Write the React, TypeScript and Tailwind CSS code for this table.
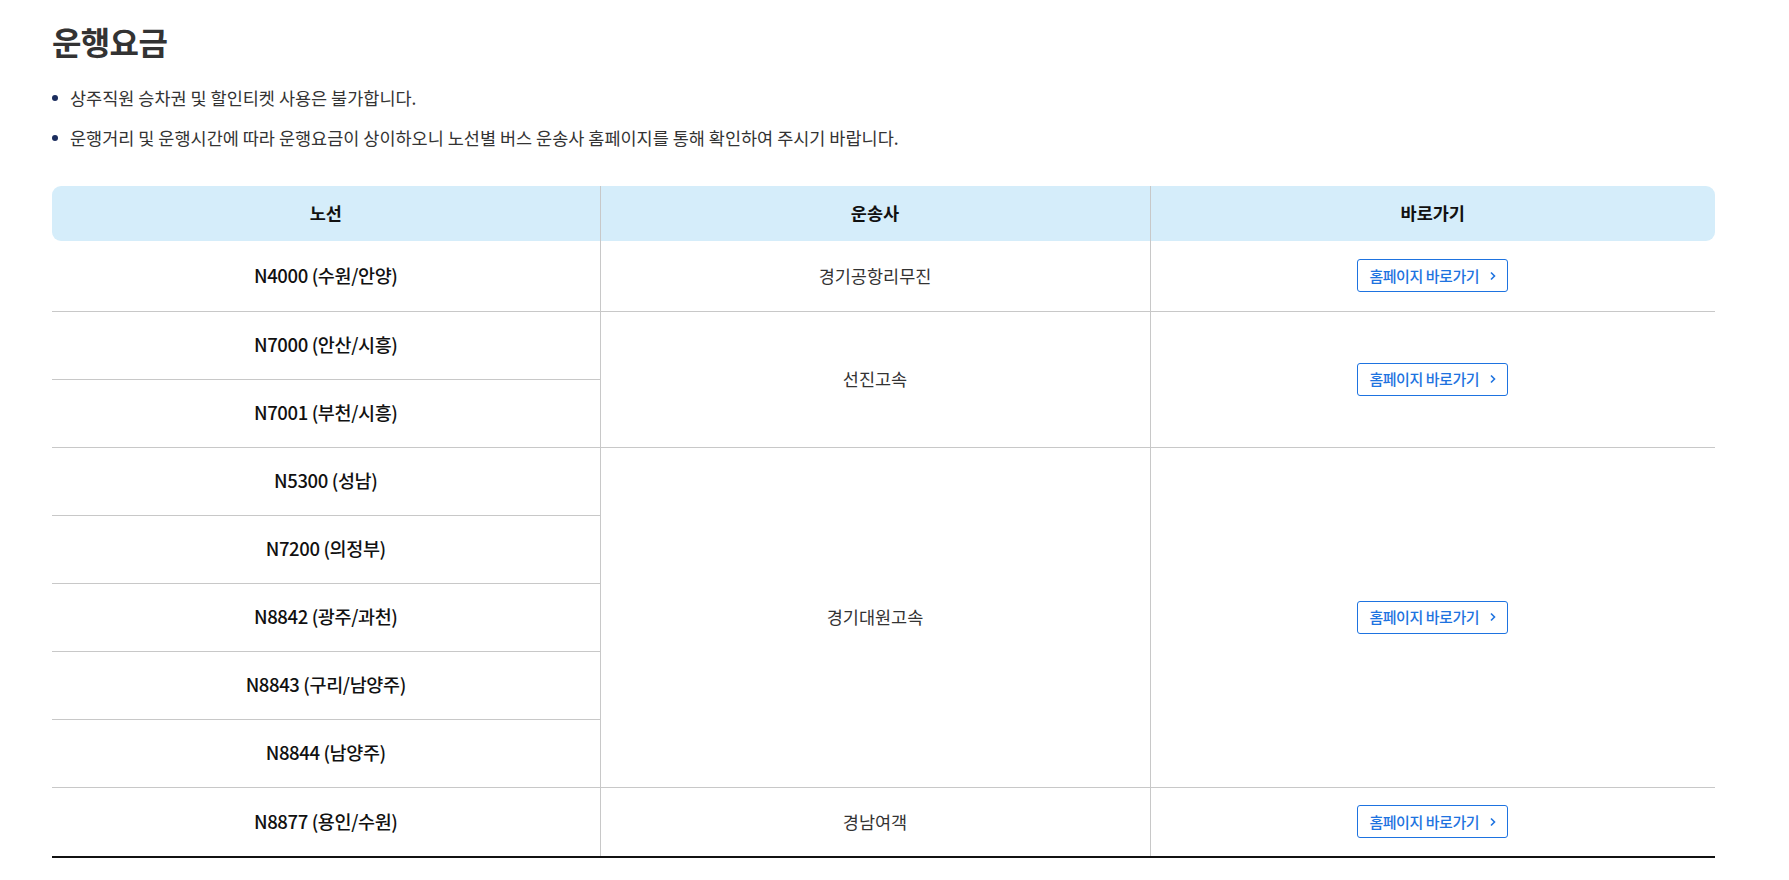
const font = { fontFamily: '"Noto Sans CJK KR", "Noto Sans", sans-serif' }

type Group = { routes: string[]; operator: string }

const groups: Group[] = [
  { routes: ['N4000 (수원/안양)'], operator: '경기공항리무진' },
  { routes: ['N7000 (안산/시흥)', 'N7001 (부천/시흥)'], operator: '선진고속' },
  {
    routes: ['N5300 (성남)', 'N7200 (의정부)', 'N8842 (광주/과천)', 'N8843 (구리/남양주)', 'N8844 (남양주)'],
    operator: '경기대원고속',
  },
  { routes: ['N8877 (용인/수원)'], operator: '경남여객' },
]

function HomeButton() {
  return (
    <a
      href="#"
      className="inline-flex h-[33px] items-center gap-[10px] rounded-[3px] border border-[#1e73e0] pl-[11px] pr-[10px] text-[15px] font-medium tracking-[-0.03em] text-[#1e73e0]"
    >
      홈페이지 바로가기
      <svg width="8" height="10" viewBox="0 0 8 10" fill="none">
        <path d="M2 1.5 5.5 5 2 8.5" stroke="#1e73e0" strokeWidth="1.6" />
      </svg>
    </a>
  )
}

export default function App() {
  const last = groups.length - 1
  return (
    <div className="min-h-[880px] bg-white px-[52px] pt-[18px]" style={font}>
      <h2 className="text-[32px] font-bold leading-[46px] tracking-[-0.02em] text-[#333]">운행요금</h2>

      <ul className="mt-[22px] flex flex-col gap-[16px] text-[17.5px] leading-[24px] text-[#333]">
        <li className="flex items-center gap-[12px]">
          <span className="h-[6px] w-[6px] rounded-full bg-[#1b2d5e]" />
          상주직원 승차권 및 할인티켓 사용은 불가합니다.
        </li>
        <li className="flex items-center gap-[12px]">
          <span className="h-[6px] w-[6px] rounded-full bg-[#1b2d5e]" />
          운행거리 및 운행시간에 따라 운행요금이 상이하오니 노선별 버스 운송사 홈페이지를 통해 확인하여 주시기 바랍니다.
        </li>
      </ul>

      <table className="mt-[36px] w-[1663px] table-fixed border-collapse border-b-2 border-b-[#111]">
        <colgroup>
          <col className="w-[548px]" />
          <col className="w-[550px]" />
          <col />
        </colgroup>
        <thead>
          <tr className="h-[55px] text-[17.5px] font-bold text-[#111]">
            <th className="rounded-l-[9px] bg-[#d5edfa]">노선</th>
            <th className="border-x border-x-[#c8c8c8] bg-[#d5edfa]">운송사</th>
            <th className="rounded-r-[9px] bg-[#d5edfa]">바로가기</th>
          </tr>
        </thead>
        <tbody>
          {groups.map((g, gi) =>
            g.routes.map((r, ri) => {
              const edge = (gi === 0 && ri === 0) || gi === last
              return (
                <tr
                  key={r}
                  className={`${edge ? 'h-[70px]' : 'h-[68px]'} ${gi > 0 || ri > 0 ? 'border-t border-t-[#c8c8c8]' : ''}`}
                >
                  <td className="text-center text-[18.5px] font-medium tracking-[-0.02em] text-[#111]">{r}</td>
                  {ri === 0 && (
                    <>
                      <td
                        rowSpan={g.routes.length}
                        className="border-x border-x-[#c8c8c8] text-center text-[17.5px] text-[#333]"
                      >
                        {g.operator}
                      </td>
                      <td rowSpan={g.routes.length} className="text-center">
                        <HomeButton />
                      </td>
                    </>
                  )}
                </tr>
              )
            }),
          )}
        </tbody>
      </table>
    </div>
  )
}
